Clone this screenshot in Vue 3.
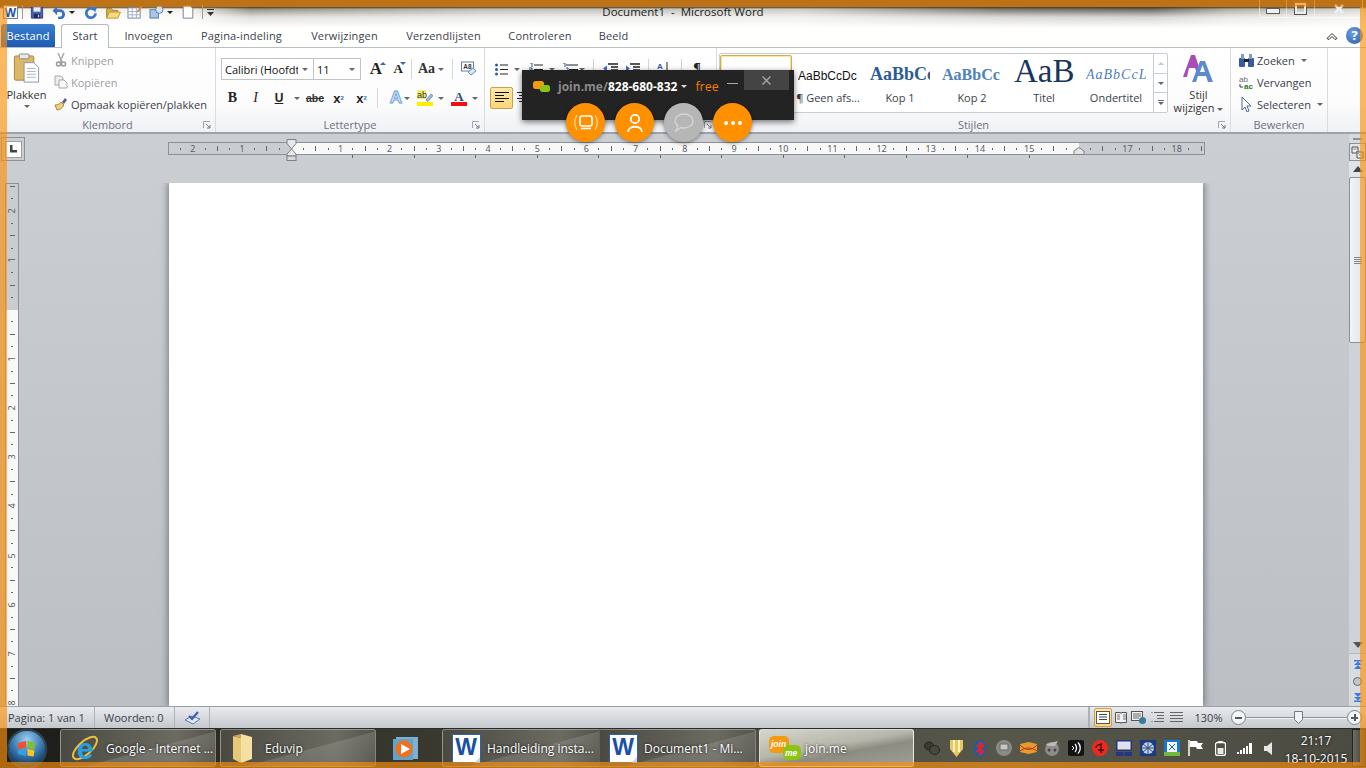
<template>
  <div class="screen">
    <header class="glass">
      <div class="titlebar">
        <div class="qat">
          <svg class="word-mini" width="15" height="14" viewBox="0 0 15 14"><rect x=".5" y=".5" width="14" height="13" fill="#fff" stroke="#5a7fb5"/><text x="7.5" y="12" text-anchor="middle" class="w-glyph" font-size="12">W</text></svg>
          <i class="qat-sep"></i>
          <svg class="q-save" width="14" height="13" viewBox="0 0 15 15"><path d="M1 1h13v13H1z" fill="#4a5fb0" stroke="#2a3a80"/><rect x="3.500" y="1.500" width="8" height="5" fill="#e8eef8"/><rect x="4" y="9" width="7" height="5" fill="#1e2a60"/><rect x="8.500" y="10" width="1.500" height="3" fill="#ccd"/></svg>
          <svg class="q-undo" width="14" height="13" viewBox="0 0 14 14"><path d="M2 5h6a4 4 0 0 1 0 8H6" fill="none" stroke="#3c70c0" stroke-width="3"/><path d="M5 0v10L0 5z" fill="#3c70c0"/></svg>
          <span class="arrow dark q-arrow1"></span>
          <svg class="q-redo" width="13" height="13" viewBox="0 0 14 14"><path d="M11 4a5 5 0 1 0 1.500 4" fill="none" stroke="#3c78c8" stroke-width="3"/><path d="M8 0l6 1-2 6z" fill="#3c78c8"/></svg>
          <svg class="q-open" width="17" height="13" viewBox="0 0 18 15"><path d="M1 3h6l1 2h6v8H1z" fill="#d8b048" stroke="#a57d20"/><path d="M4 7h13l-3 7H1z" fill="#f6da80" stroke="#b88d28"/></svg>
          <svg class="q-form" width="16" height="14" viewBox="0 0 17 15"><rect x="1" y="3" width="13" height="11" fill="#fff" stroke="#6c84a8"/><path d="M1 7h13M1 10.500h13M5.500 3v11M10 3v11" stroke="#9db0cc"/><path d="M10 7l5-6 1.500 1-5 6z" fill="#e08a28"/></svg>
          <svg class="q-shape" width="16" height="14" viewBox="0 0 17 15"><rect x="1" y="5" width="9" height="9" fill="#a9c6e8" stroke="#54799f"/><circle cx="11" cy="5" r="4" fill="#d4e2f2" stroke="#54799f"/></svg>
          <span class="arrow dark q-arrow2"></span>
          <svg class="q-page" width="12" height="14" viewBox="0 0 13 16"><path d="M1 1h8l3 3v11H1z" fill="#fff" stroke="#67758a"/></svg>
          <i class="qat-sep q-sep2"></i>
          <svg class="q-more" width="8" height="8" viewBox="0 0 8 8"><path d="M0 1h7v1H0z" fill="#333"/><path d="M0 4h7L3.500 8z" fill="#333"/></svg>
        </div>
        <div class="doc-title">Document1&nbsp; -&nbsp; Microsoft Word</div>
        <div class="win-controls">
          <span class="win-btn min"><i></i></span>
          <span class="win-btn max"><i></i></span>
          <span class="win-btn close">
            <svg width="12" height="10" viewBox="0 0 12 10"><path d="M2 1l8 8M10 1l-8 8" stroke="#eef" stroke-width="2.500"/></svg>
          </span>
        </div>
      </div>
      <nav class="tabs">
        <span class="tab-file">Bestand</span>
        <span class="tab-active">Start</span>
        <span v-for="tab in tabs" :key="tab" class="tab">{{ tab }}</span>
        <span class="tab-tools">
          <svg width="12" height="8" viewBox="0 0 12 8"><path d="M1 6.500L6 1.500l5 5-2 1-3-3-3 3z" fill="#fff" stroke="#333"/></svg>
          <span class="help">?</span>
        </span>
      </nav>
    </header>

    <section class="ribbon">
      <div class="group g-clip">
        <div class="group-body clip-body">
          <div class="paste">
            <svg width="28" height="31" viewBox="0 0 28 32">
              <rect x="1" y="3" width="20" height="25" rx="1.500" fill="#dcb765" stroke="#a58436"/>
              <rect x="6" y="1" width="10" height="5" rx="1" fill="#e9e9e9" stroke="#888"/>
              <path d="M11 10h10l5 5v15H11z" fill="#fff" stroke="#8a95a8"/>
              <path d="M14 16h9M14 19h9M14 22h9M14 25h9" stroke="#a8b4c4"/>
            </svg>
            <span class="paste-label">Plakken</span>
            <span class="arrow"></span>
          </div>
          <div class="cmd-list">
            <div class="cmd muted">
              <svg width="14" height="14" viewBox="0 0 14 14"><path d="M4 0l4 9M10 0L6 9" stroke="#aaa" stroke-width="1.500"/><circle cx="4.500" cy="11" r="2" fill="none" stroke="#999" stroke-width="1.500"/><circle cx="9.500" cy="11" r="2" fill="none" stroke="#999" stroke-width="1.500"/></svg>
              Knippen
            </div>
            <div class="cmd muted">
              <svg width="14" height="14" viewBox="0 0 14 14"><path d="M1 1h6l2 2v7H1z" fill="#eee" stroke="#aaa"/><path d="M5 5h5l3 3v5H5z" fill="#f8f8f8" stroke="#aaa"/></svg>
              Kopiëren
            </div>
            <div class="cmd">
              <svg width="14" height="14" viewBox="0 0 14 14"><path d="M8 5l3-4 2 2-3 4z" fill="#5c5a9c"/><path d="M1 8c3 0 5-1 6-3l3 3c-2 3-4 5-7 5z" fill="#eed07c" stroke="#a58a3c"/></svg>
              Opmaak kopiëren/plakken
            </div>
          </div>
        </div>
        <div class="group-label">Klembord<svg class="launcher" width="8" height="8" viewBox="0 0 8 8"><path d="M.5 7V.5H7" fill="none" stroke="#9aa"/><path d="M3 3l4 4M7 4v3H4" fill="none" stroke="#778"/></svg></div>
      </div>

      <div class="group g-font">
        <div class="group-body tools-body">
          <div class="tool-row font-row1">
            <div class="combo combo-font"><span class="combo-text">Calibri (Hoofdt</span><span class="arrow"></span></div>
            <div class="combo combo-size"><span class="combo-text">11</span><span class="arrow"></span></div>
            <span class="cell end serif-a big">A<sup class="up"></sup></span>
            <span class="cell end serif-a small">A<sup class="down"></sup></span>
            <i class="sep"></i>
            <span class="cell end aa">Aa</span>
            <span class="cell"><span class="arrow"></span></span>
            <i class="sep"></i>
            <span class="cell end">
              <svg width="16" height="16" viewBox="0 0 16 16"><rect x=".5" y="1" width="12" height="9" fill="#fff" stroke="#5f7fa8"/><text x="6.500" y="8" text-anchor="middle" font-size="6.500" font-weight="700" fill="#333" font-family="Liberation Sans">A8</text><path d="M7 11l5-4 3 3-5 4z" fill="#dde8f5" stroke="#5f8fc8"/></svg>
            </span>
          </div>
          <div class="tool-row font-row2">
            <b class="cell fmt bold">B</b>
            <em class="cell fmt ital">I</em>
            <u class="cell fmt under">U</u>
            <span class="cell"><span class="arrow"></span></span>
            <s class="cell strike">abc</s>
            <span class="cell script">x<sub>2</sub></span>
            <span class="cell script">x<sup>2</sup></span>
            <i class="sep"></i>
            <span class="cell end glow">A</span>
            <span class="cell"><span class="arrow"></span></span>
            <span class="cell end">
              <svg width="16" height="16" viewBox="0 0 16 16"><rect y="0" width="9" height="9" fill="#f6ec6a"/><text x="0" y="8" font-size="9" fill="#333" font-family="Liberation Sans">ab</text><path d="M9 10l5-6 2 1.500-5 6z" fill="#aabbd8" stroke="#6078a0" stroke-width=".7"/><rect y="12" width="16" height="4" fill="#ffee00"/></svg>
            </span>
            <span class="cell"><span class="arrow"></span></span>
            <span class="cell end">
              <svg width="16" height="16" viewBox="0 0 16 16"><text x="8" y="11" text-anchor="middle" font-size="13" font-weight="700" fill="#2c4a80" font-family="Liberation Serif">A</text><rect y="12" width="16" height="4" fill="#f01010"/></svg>
            </span>
            <span class="cell"><span class="arrow"></span></span>
          </div>
        </div>
        <div class="group-label">Lettertype<svg class="launcher" width="8" height="8" viewBox="0 0 8 8"><path d="M.5 7V.5H7" fill="none" stroke="#9aa"/><path d="M3 3l4 4M7 4v3H4" fill="none" stroke="#778"/></svg></div>
      </div>

      <div class="group g-para">
        <div class="group-body para-body">
          <div class="tool-row para-row1">
            <span class="cell end">
              <svg width="13" height="13" viewBox="0 0 13 13"><path d="M5 2h8M5 6.500h8M5 11h8" stroke="#222"/><circle cx="1.500" cy="2" r="1.500" fill="#3355a0"/><circle cx="1.500" cy="6.500" r="1.500" fill="#3355a0"/><circle cx="1.500" cy="11" r="1.500" fill="#3355a0"/></svg>
            </span>
            <span class="cell"><span class="arrow"></span></span>
            <span class="cell end">
              <svg width="14" height="13" viewBox="0 0 14 13"><path d="M5 2h9M5 6.500h9M5 11h9" stroke="#222"/><path d="M1 0h2v4M0 5h3v2H0v2h3M0 10h3v3H0" fill="none" stroke="#3355a0"/></svg>
            </span>
            <span class="cell"><span class="arrow"></span></span>
            <span class="cell end">
              <svg width="16" height="13" viewBox="0 0 16 13"><path d="M4 2h12M7 6.500h9M9 11h7" stroke="#222"/><path d="M1 0h2v4M4 5h2v3M6 9h2v3" fill="none" stroke="#3355a0"/></svg>
            </span>
            <span class="cell"><span class="arrow"></span></span>
            <i class="sep"></i>
            <span class="cell end">
              <svg width="15" height="13" viewBox="0 0 15 13"><path d="M5 1h10M8 4h7M8 7h7M5 10h10" stroke="#222" stroke-width="1.500"/><path d="M0 5.500l4-3v6z" fill="#3b6bc0"/></svg>
            </span>
            <span class="cell end">
              <svg width="15" height="13" viewBox="0 0 15 13"><path d="M5 1h10M8 4h7M8 7h7M5 10h10" stroke="#222" stroke-width="1.500"/><path d="M5 5.500l-4-3v6z" fill="#3b6bc0"/></svg>
            </span>
            <i class="sep"></i>
            <span class="cell start">
              <svg width="14" height="15" viewBox="0 0 14 15"><text x="4" y="7" text-anchor="middle" font-size="8" font-weight="700" fill="#3a5aa8" font-family="Liberation Sans">A</text><text x="4" y="14" text-anchor="middle" font-size="7" fill="#b03030" font-family="Liberation Sans">Z</text><path d="M11 0v13" stroke="#222"/></svg>
            </span>
            <i class="sep"></i>
            <span class="cell pilcrow">¶</span>
          </div>
          <div class="tool-row para-row2">
            <span class="cell align-on">
              <svg width="14" height="12" viewBox="0 0 14 12"><path d="M0 .5h14M0 3.500h9M0 6.500h14M0 9.500h9" stroke="#111"/></svg>
            </span>
            <span class="cell">
              <svg width="14" height="12" viewBox="0 0 14 12"><path d="M0 .5h14M2 3.500h10M0 6.500h14M2 9.500h10" stroke="#222"/></svg>
            </span>
          </div>
        </div>
        <div class="group-label"><svg class="launcher" width="8" height="8" viewBox="0 0 8 8"><path d="M.5 7V.5H7" fill="none" stroke="#9aa"/><path d="M3 3l4 4M7 4v3H4" fill="none" stroke="#778"/></svg></div>
      </div>

      <div class="group g-styles">
        <div class="group-body styles-body">
          <div class="gallery">
            <div class="style-item selected">
              <div class="preview prev-normal">AaBbCcDc</div>
              <div class="style-name">¶ Standaard</div>
            </div>
            <div v-for="s in styles" :key="s.name" class="style-item">
              <div class="preview" :class="s.cls">{{ s.sample }}</div>
              <div class="style-name">{{ s.name }}</div>
            </div>
            <div class="spin">
              <span class="spin-btn"><span class="arrow flip pale"></span></span>
              <span class="spin-btn"><span class="arrow"></span></span>
              <span class="spin-btn"><i class="bar"></i><span class="arrow"></span></span>
            </div>
          </div>
          <div class="change-style">
            <svg width="32" height="28" viewBox="0 0 32 28">
              <path d="M0 22L8 0h4l6 18h-4l-2-5H6l-2 9z" fill="#a94cb4"/>
              <path d="M9 27L17 6h5l8 21h-5l-2-6h-8l-2 6z" fill="#5c8ad0"/>
              <path d="M17 17l2.500-7 2.500 7z" fill="#fff"/>
            </svg>
            <span>Stijl</span>
            <span>wijzigen <span class="arrow"></span></span>
          </div>
        </div>
        <div class="group-label">Stijlen<svg class="launcher" width="8" height="8" viewBox="0 0 8 8"><path d="M.5 7V.5H7" fill="none" stroke="#9aa"/><path d="M3 3l4 4M7 4v3H4" fill="none" stroke="#778"/></svg></div>
      </div>

      <div class="group g-edit">
        <div class="group-body edit-body">
          <div class="cmd-list">
            <div class="cmd">
              <svg width="15" height="14" viewBox="0 0 15 14"><rect x="0" y="5" width="6" height="9" rx="1" fill="#3a5a9c"/><rect x="9" y="5" width="6" height="9" rx="1" fill="#3a5a9c"/><rect x="2" y="1" width="3" height="5" fill="#7c9ad0"/><rect x="10" y="1" width="3" height="5" fill="#7c9ad0"/><rect x="5" y="6" width="5" height="3" fill="#223"/></svg>
              Zoeken <span class="arrow"></span>
            </div>
            <div class="cmd">
              <svg width="15" height="15" viewBox="0 0 15 15"><text x="0" y="7" font-size="8" fill="#667" font-family="Liberation Sans">ab</text><text x="5" y="14" font-size="8" font-weight="700" fill="#207a20" font-family="Liberation Sans">ac</text><path d="M1 9v3h3" fill="none" stroke="#336"/></svg>
              Vervangen
            </div>
            <div class="cmd">
              <svg width="15" height="15" viewBox="0 0 15 15"><path d="M3 0v13l3-3 2 5 2-1-2-5h4z" fill="#fff" stroke="#4a6a9c"/></svg>
              Selecteren <span class="arrow"></span>
            </div>
          </div>
        </div>
        <div class="group-label">Bewerken</div>
      </div>
    </section>

    <main class="workspace">
      <div class="work-left">
        <div class="ruler-row">
          <div class="tab-stop"><span><svg width="9" height="8" viewBox="0 0 9 8"><path d="M1 0h2.500v5H8v2.500H1z" fill="#444"/></svg></span></div>
          <div class="h-ruler-wrap">
            <div class="h-ruler">
              <div class="h-cells">
                <span v-for="c in hCells" :key="c.i" class="h-cell">
                  <template v-if="c.label">{{ c.label }}</template>
                  <i v-else-if="c.kind" :class="c.kind"></i>
                </span>
              </div>
              <svg class="indent-left" width="12" height="22" viewBox="0 0 12 22"><path d="M1 .5h9v4L5.500 10 1 4.500zM5.500 10L10 15v2H1v-2z" fill="#e8e8e8" stroke="#7c8088"/><rect x="1" y="17" width="9" height="4.500" fill="#d8d8d8" stroke="#7c8088"/></svg>
              <svg class="indent-right" width="12" height="8" viewBox="0 0 12 8"><path d="M1 7.500V4L6 .5 11 4v3.500z" fill="#e4e4e4" stroke="#7c8088"/></svg>
            </div>
            <div class="tabstops"></div>
          </div>
        </div>
        <div class="doc-row">
          <div class="v-ruler">
            <div class="v-cells">
              <span v-for="c in vCells" :key="c.i" class="v-cell">
                <span v-if="c.label" class="v-num">{{ c.label }}</span>
                <i v-else-if="c.kind" :class="c.kind"></i>
              </span>
            </div>
          </div>
          <div class="page"></div>
        </div>
      </div>
      <aside class="scrollbar">
        <div class="sb-dash"><i></i></div>
        <div class="sb-toggle">
          <svg width="13" height="13" viewBox="0 0 13 13"><path d="M1 1h6v6H1z" fill="#eee" stroke="#555"/><path d="M6 6h6v6H6z" fill="#eee" stroke="#555"/><path d="M2 3h4M8 9h3M5 5l4 4" stroke="#999"/></svg>
        </div>
        <div class="sb-btn"><span class="tri up"></span></div>
        <div class="sb-thumb"><i></i></div>
        <div class="sb-track"></div>
        <div class="sb-btn down-btn"><span class="tri down"></span></div>
        <div class="sb-nav">
          <svg width="8" height="9" viewBox="0 0 8 9"><path d="M0 0h8v1.500H0z M4 1.500L8 5H0z M4 5l4 4H0z" fill="#3a7ae0"/></svg>
          <span class="browse"></span>
          <svg width="8" height="9" viewBox="0 0 8 9"><path d="M0 0l4 4 4-4z M0 4l4 3.500L8 4z M0 7.500h8V9H0z" fill="#3a7ae0"/></svg>
        </div>
      </aside>
    </main>

    <footer class="statusbar">
      <span class="st-item st-page">Pagina: 1 van 1</span>
      <span class="st-item st-words">Woorden: 0</span>
      <span class="st-item st-check">
        <svg width="17" height="14" viewBox="0 0 17 14"><path d="M1 9l7-4 8 3-7 5z" fill="#dfe8f6" stroke="#5a78b8"/><path d="M5 5l3 3 6-7" fill="none" stroke="#3a5ab0" stroke-width="2"/></svg>
      </span>
      <div class="st-right">
        <i class="st-rule"></i>
        <span class="view on"><svg width="14" height="13" viewBox="0 0 14 13"><rect x=".5" y=".5" width="13" height="12" fill="#fff" stroke="#555"/><path d="M3 3.500h8M3 6h8M3 8.500h8" stroke="#444"/></svg></span>
        <span class="view"><svg width="12" height="13" viewBox="0 0 12 13"><path d="M.5 1.500h5l.5 1 .5-1h5v10h-5l-.5 1-.5-1h-5z" fill="#f2f2f2" stroke="#555"/><path d="M2 4h3M2 6h3M2 8h3M8 4h3M8 6h3M8 8h3" stroke="#777"/></svg></span>
        <span class="view"><svg width="15" height="13" viewBox="0 0 15 13"><rect x=".5" y=".5" width="11" height="9" fill="#f2f2f2" stroke="#555"/><path d="M2 3h8M2 5h8M2 7h6" stroke="#666"/><circle cx="11.500" cy="9.500" r="3.500" fill="#3a7a9c"/></svg></span>
        <span class="view"><svg width="13" height="11" viewBox="0 0 13 11"><path d="M3 .5h10M6 3.500h7M6 6.500h7M3 9.500h10" stroke="#666"/><path d="M0 .5h2M0 9.500h2" stroke="#999"/></svg></span>
        <span class="view"><svg width="13" height="11" viewBox="0 0 13 11"><path d="M0 .5h13M0 3.500h13M0 6.500h13M0 9.500h13" stroke="#666"/></svg></span>
        <span class="zoom-pct">130%</span>
        <span class="zoom-btn"><i class="h"></i></span>
        <span class="zoom-track"><svg class="knob" width="9" height="13" viewBox="0 0 9 13"><path d="M.5.500h8v8l-4 4-4-4z" fill="#f2f3f5" stroke="#757a82"/></svg></span>
        <span class="zoom-btn"><i class="h"></i><i class="v"></i></span>
      </div>
    </footer>

    <nav class="taskbar">
      <div class="orb-cell">
        <span class="orb">
          <svg width="20" height="20" viewBox="0 0 20 20">
            <path d="M1 4l8-2 0 7-8 1z" fill="#f05030"/>
            <path d="M10.500 1.500l8 3-1 6-7-1.500z" fill="#80c030"/>
            <path d="M1 11l8-1 0 7-8-2z" fill="#30a0e8"/>
            <path d="M10.500 10l7 1.500-1 6-6-1z" fill="#f8c820"/>
          </svg>
        </span>
      </div>
      <span class="task t-ie">
        <svg width="31" height="31" viewBox="0 0 31 31">
          <ellipse cx="15" cy="15" rx="15" ry="6.500" transform="rotate(-42 15 15)" fill="none" stroke="#e8c040" stroke-width="2"/>
          <text x="15" y="26" text-anchor="middle" class="ie-glyph">e</text>
        </svg>
        <span class="task-text">Google - Internet ...</span>
      </span>
      <span class="task t-folder">
        <svg width="24" height="30" viewBox="0 0 24 30"><path d="M2 3l8 2v25L2 26z" fill="#e6c878"/><path d="M10 1l11 3v22l-11 4z" fill="#f4e0a0"/><path d="M10 1l-8 2 8 2z" fill="#caa858"/></svg>
        <span class="task-text">Eduvip</span>
      </span>
      <span class="pinned">
        <svg width="26" height="25" viewBox="0 0 26 25"><rect x="3" y="1" width="22" height="22" fill="#7eb0d0"/><rect x="0" y="3" width="20" height="21" fill="#62a2cc"/><circle cx="11" cy="13" r="8.500" fill="#f0701c"/><path d="M8 8l9 5-9 5z" fill="#fff"/></svg>
      </span>
      <span class="task-group">
        <span class="task t-w1">
          <svg width="29" height="29" viewBox="0 0 29 29"><rect x=".5" y=".5" width="28" height="28" fill="#fff" stroke="#3060a8"/><path d="M22 29l6-6v6z" fill="#c8d4e8"/><text x="14" y="21" text-anchor="middle" class="w-glyph" font-size="23">W</text></svg>
          <span class="task-text">Handleiding insta...</span>
        </span>
        <span class="task t-w2">
          <svg width="29" height="29" viewBox="0 0 29 29"><rect x=".5" y=".5" width="28" height="28" fill="#fff" stroke="#3060a8"/><path d="M22 29l6-6v6z" fill="#c8d4e8"/><text x="14" y="21" text-anchor="middle" class="w-glyph" font-size="23">W</text></svg>
          <span class="task-text">Document1 - Mi...</span>
        </span>
      </span>
      <span class="task t-join">
        <svg width="32" height="24" viewBox="0 0 32 24"><rect x="0" y="0" width="20" height="17" rx="5" fill="#f49a10"/><rect x="14" y="9" width="18" height="15" rx="5" fill="#8cc414"/><text x="2" y="11" font-size="8.500" font-weight="700" font-style="italic" fill="#fff" font-family="Liberation Sans">join</text><text x="16" y="20" font-size="8.500" font-weight="700" font-style="italic" fill="#fff" font-family="Liberation Sans">me</text></svg>
        <span class="task-text">join.me</span>
      </span>
      <div class="tray">
        <span class="tray-cell"><svg width="16" height="14" viewBox="0 0 16 14"><ellipse cx="5" cy="5" rx="4.500" ry="4" fill="#3a3a34" stroke="#26261f"/><ellipse cx="10.500" cy="9" rx="5" ry="4.500" fill="#48483f" stroke="#26261f"/></svg></span>
        <span class="tray-cell"><svg width="13" height="17" viewBox="0 0 13 17"><path d="M0 0h13v9l-6.500 8L0 9z" fill="#e8c860"/><path d="M3 0h2v12H3zM8 0h2v12H8z" fill="#fbf2c0"/></svg></span>
        <span class="tray-cell"><svg width="12" height="17" viewBox="0 0 12 17"><ellipse cx="6" cy="8.500" rx="6" ry="8.500" fill="#1460b0"/><path d="M2.500 5l7 6.500L6 14.500v-12l3.500 3L2.500 12" fill="none" stroke="#f02020" stroke-width="1.800"/></svg></span>
        <span class="tray-cell"><svg width="16" height="16" viewBox="0 0 16 16"><circle cx="8" cy="8" r="8" fill="#8a8a86"/><rect x="4" y="4" width="8" height="6" fill="#c8c8c4" stroke="#666"/></svg></span>
        <span class="tray-cell"><svg width="17" height="12" viewBox="0 0 17 12"><path d="M0 2L8.500 0 17 2v8l-8.500 2L0 10z" fill="#e89a2c"/><path d="M0 3c6 6 11 6 17 0M0 9c6-4 11-4 17 0" fill="none" stroke="#b03a18"/></svg></span>
        <span class="tray-cell"><svg width="16" height="16" viewBox="0 0 16 16"><circle cx="8" cy="9" r="7" fill="#8c8c88"/><path d="M2 4l12-3-3 5H4z" fill="#bbb"/><circle cx="5" cy="10" r="1.500" fill="#444"/><circle cx="11" cy="10" r="1.500" fill="#444"/></svg></span>
        <span class="tray-cell"><svg width="16" height="16" viewBox="0 0 16 16"><rect width="16" height="16" rx="2" fill="#141414"/><path d="M4 6l2 2-2 2" fill="none" stroke="#fff"/><path d="M7 4c2 2 2 6 0 8M10 2.500c3 3 3 8 0 11" fill="none" stroke="#fff" stroke-width="1.300"/></svg></span>
        <span class="tray-cell"><svg width="16" height="16" viewBox="0 0 16 16"><circle cx="8" cy="8" r="8" fill="#e82a20"/><path d="M4 8c0-3 3-4 6-3M9 3v10M6 10h6" fill="none" stroke="#3a120e" stroke-width="1.300"/></svg></span>
        <span class="tray-cell"><svg width="16" height="16" viewBox="0 0 16 16"><rect width="16" height="11" fill="#26367c"/><rect x="1.500" y="1.500" width="13" height="8" fill="#dfe2ea"/><rect y="12" width="7.500" height="4" fill="#26367c"/><rect x="8.500" y="12" width="7.500" height="4" fill="#26367c"/></svg></span>
        <span class="tray-cell"><svg width="16" height="16" viewBox="0 0 16 16"><rect width="16" height="16" fill="#1c3a80"/><circle cx="8" cy="8" r="6" fill="#c8d0e0"/><path d="M3 4l10 8M13 4L3 12M8 2v12M2 8h12" stroke="#2a4c90"/></svg></span>
        <span class="tray-cell"><svg width="16" height="16" viewBox="0 0 16 16"><rect width="16" height="16" fill="#1878d0"/><rect x="3" y="2" width="10" height="10" fill="#eef4fa"/><path d="M5 4l6 6M11 4l-6 6" stroke="#1860b0"/><rect y="12" width="16" height="4" fill="#70b840"/></svg></span>
        <span class="tray-cell"><svg width="16" height="16" viewBox="0 0 16 16"><path d="M1 0v16" stroke="#fff" stroke-width="1.500"/><path d="M2 1h7l1 2h5l-2 3 2 3h-6l-1-2H2z" fill="#fff"/></svg></span>
        <span class="tray-cell"><svg width="11" height="15" viewBox="0 0 11 15"><rect x=".5" y="1.500" width="10" height="13" rx="2" fill="none" stroke="#fff" stroke-width="1.300"/><rect x="3.500" y="0" width="4" height="2" fill="#fff"/><rect x="2.500" y="7" width="6" height="6" fill="#e8e8e4"/></svg></span>
        <span class="tray-cell"><svg width="15" height="11" viewBox="0 0 15 11"><path d="M0 9h2v2H0zM3 7h2v4H3zM6 5h2v6H6zM9 3h2v8H9zM12 0h3v11h-3z" fill="#fff"/></svg></span>
        <span class="tray-cell"><svg width="8" height="13" viewBox="0 0 8 13"><path d="M0 4h3l5-4v13l-5-4H0z" fill="#e6e6e2"/></svg></span>
      </div>
      <div class="clock"><span>21:17</span><span>18-10-2015</span></div>
      <span class="show-desktop"></span>
    </nav>

    <!-- join.me bar floats above the ribbon -->
    <div class="joinme">
      <div class="jm-top">
        <svg class="jm-logo" width="17" height="11" viewBox="0 0 17 11"><rect x="0" y="0" width="11" height="8" rx="2.500" fill="#f49a10"/><rect x="7" y="4" width="10" height="7" rx="2.500" fill="#8cc414"/></svg>
        <span class="jm-url"><span class="jm-host">join.me/</span>828-680-832</span>
        <span class="jm-caret"></span>
        <span class="jm-free">free</span>
        <i class="jm-min"></i>
        <span class="jm-close"><svg width="9" height="9" viewBox="0 0 9 9"><path d="M.5.500l8 8M8.500.500l-8 8" stroke="#a8a8a8" stroke-width="1.300"/></svg></span>
      </div>
      <div class="jm-actions">
        <span class="jm-circle">
          <svg width="24" height="20" viewBox="0 0 24 20"><rect x="6" y="3" width="12" height="10" rx="2" fill="none" stroke="#fff" stroke-width="1.600"/><path d="M7 15.500h10" stroke="#fff" stroke-width="1.600"/><path d="M3 2C0 7 0 12 3 17M21 2c3 5 3 10 0 15" fill="none" stroke="#ffd9a0" stroke-width="1.200"/></svg>
        </span>
        <span class="jm-circle">
          <svg width="18" height="20" viewBox="0 0 18 20"><circle cx="9" cy="6" r="4.200" fill="none" stroke="#fff" stroke-width="1.800"/><path d="M2 19c0-7 14-7 14 0" fill="none" stroke="#fff" stroke-width="1.800"/></svg>
        </span>
        <span class="jm-circle off">
          <svg width="20" height="19" viewBox="0 0 20 19"><path d="M10 1c5 0 9 3 9 7s-4 7-9 7c-1 0-2 0-3-.500L2 18l2-5C2 11.500 1 10 1 8c0-4 4-7 9-7z" fill="none" stroke="#d4d4d4" stroke-width="1.400"/></svg>
        </span>
        <span class="jm-circle"><i></i><i></i><i></i></span>
      </div>
    </div>

    <!-- orange screen-share frame -->
    <div class="share-frame"></div>
  </div>
</template>

<script setup>
const tabs = ['Invoegen', 'Pagina-indeling', 'Verwijzingen', 'Verzendlijsten', 'Controleren', 'Beeld']

const styles = [
  { name: '¶ Geen afs...', sample: 'AaBbCcDc', cls: 'prev-normal' },
  { name: 'Kop 1', sample: 'AaBbCc', cls: 'prev-h1' },
  { name: 'Kop 2', sample: 'AaBbCc', cls: 'prev-h2' },
  { name: 'Titel', sample: 'AaB', cls: 'prev-title' },
  { name: 'Ondertitel', sample: 'AaBbCcL', cls: 'prev-sub' }
]

// ruler cells are quarter-cm wide: number, dot, tick, dot
function rulerCell(i) {
  const m = ((i % 4) + 4) % 4
  if (m === 0) return { i, label: i === 0 || i === 64 ? '' : String(Math.abs(i / 4)), kind: '' }
  return { i, label: '', kind: m === 2 ? 'tick' : 'dot' }
}

const hCells = []
for (let i = -10; i <= 74; i++) hCells.push(rulerCell(i))

const vCells = []
for (let i = -10; i <= 33; i++) vCells.push(rulerCell(i))
</script>

<style>
html, body { margin: 0; background: #c9ccd1; }
</style>

<style scoped>
.screen {
  position: relative;
  width: 1366px;
  height: 768px;
  overflow: hidden;
  display: flex;
  flex-direction: column;
  font-family: "Open Sans", "Noto Sans", sans-serif;
  font-size: 11px;
  color: #3b3f4a;
}
i { display: block; font-style: normal; }

.arrow {
  display: inline-block;
  width: 0;
  height: 0;
  border-left: 3px solid transparent;
  border-right: 3px solid transparent;
  border-top: 3px solid #666;
  vertical-align: middle;
}
.arrow.dark { border-top-color: #222; }
.arrow.flip { border-top: 0; border-bottom: 3px solid #666; }
.arrow.pale { border-bottom-color: #c4c7cc; }

/* window glass */
.glass {
  height: 48px;
  flex: none;
  background:
    linear-gradient(to bottom, #4a3c28 0, #4a3c28 7px, transparent 9px),
    linear-gradient(to bottom, rgba(255,255,255,0) 8px, rgba(255,255,255,.75) 17px, #fffffd 28px),
    linear-gradient(to right, #f4f0e8 0, #f4f0e8 190px, #8a8578 250px, #b8b5ac 480px, #c8c5bc 800px, #6c685e 1000px, #5a574e 1150px, #a8a498 1230px, #d8d5cc 1366px);
  border-bottom: 1px solid #b9bdc4;
  box-sizing: border-box;
}
.titlebar {
  height: 24px;
  display: flex;
  position: relative;
}
.qat {
  display: flex;
  align-items: center;
  height: 24px;
  width: 240px;
}
.word-mini { margin-left: 3px; }
.w-glyph { font-family: "Liberation Sans", sans-serif; font-weight: 700; fill: #1a4fa8; }
.qat-sep { width: 1px; height: 14px; background: #9a9a9a; margin-left: 4px; }
.q-save { margin-left: 7px; }
.q-undo { margin-left: 8px; }
.q-arrow1 { margin-left: 3px; }
.q-redo { margin-left: 9px; }
.q-open { margin-left: 8px; }
.q-form { margin-left: 5px; }
.q-shape { margin-left: 6px; }
.q-arrow2 { margin-left: 2px; }
.q-page { margin-left: 9px; }
.q-sep2 { margin-left: 8px; }
.q-more { margin-left: 4px; }
.doc-title {
  position: absolute;
  left: 0;
  right: 0;
  top: 4px;
  text-align: center;
  font-size: 11.500px;
  line-height: 16px;
  color: #1c1c1c;
}
.win-controls {
  margin-left: auto;
  display: flex;
  height: 18px;
  margin-right: 3px;
  border: 1px solid rgba(255,255,255,.55);
  border-top: 0;
  border-radius: 0 0 4px 4px;
  box-sizing: border-box;
  position: relative;
}
.win-btn {
  display: flex;
  align-items: center;
  justify-content: center;
  border-right: 1px solid rgba(255,255,255,.45);
  width: 27px;
  box-sizing: border-box;
}
.win-btn.max { width: 28px; }
.win-btn.close { width: 47px; border-right: 0; }
.win-btn.min i { width: 12px; height: 4px; margin-top: 4px; background: #f0f0f0; border: 1px solid #5d5d5d; }
.win-btn.max i { width: 7px; height: 7px; border: 2px solid #eee; outline: 1px solid #555; }

.tabs {
  height: 23px;
  display: grid;
  grid-template-columns: 1px 54px 6px 48px 2px 75px 111px 95px 103px 90px 57px 1fr;
  align-items: stretch;
  line-height: 23px;
  color: #3b4250;
  font-size: 11px;
  letter-spacing: .15px;
}
.tab-file {
  grid-column: 2;
  background: linear-gradient(to bottom, #3b7fd0, #1c5cb2);
  color: #fff;
  text-align: center;
  border-radius: 3px 3px 0 0;
}
.tab-active {
  grid-column: 4;
  background: #fff;
  border: 1px solid #b6bac1;
  border-bottom: 0;
  border-radius: 3px 3px 0 0;
  text-align: center;
  margin-bottom: -1px;
  box-sizing: border-box;
  line-height: 22px;
}
.tab { text-align: center; }
.tab:nth-of-type(3) { grid-column: 6; }
.tab-tools {
  display: flex;
  align-items: center;
  justify-content: flex-end;
  gap: 8px;
  padding-right: 3px;
}
.help {
  width: 17px;
  height: 17px;
  border-radius: 50%;
  background: radial-gradient(circle at 40% 35%, #6c9ee0, #2a5cb0);
  color: #fff;
  font-weight: 700;
  font-size: 13px;
  line-height: 17px;
  text-align: center;
  letter-spacing: 0;
}

/* ribbon */
.ribbon {
  height: 86px;
  flex: none;
  display: flex;
  box-sizing: border-box;
  border-bottom: 2px solid #9fa3a9;
  background: linear-gradient(to bottom, #fff 0, #fcfcfd 65%, #eff1f4 100%);
}
.group {
  display: flex;
  flex-direction: column;
  border-right: 1px solid #d9dce1;
  box-sizing: border-box;
}
.g-clip { width: 216px; }
.g-font { width: 269px; }
.g-para { width: 232px; }
.g-styles { width: 514px; }
.g-edit { width: 97px; }
.group-body { height: 69px; flex: none; box-sizing: border-box; }
.group-label {
  position: relative;
  text-align: center;
  line-height: 16px;
  color: #6f7180;
  font-size: 11px;
}
.launcher { position: absolute; right: 4px; top: 4px; }

.clip-body { display: flex; padding-left: 7px; }
.paste {
  width: 39px;
  display: flex;
  flex-direction: column;
  align-items: center;
  padding-top: 5px;
}
.paste-label { color: #333; line-height: 14px; margin-top: 4px; }
.paste .arrow { margin-top: 3px; }
.cmd-list { margin-left: 8px; padding-top: 1px; }
.cmd {
  height: 22px;
  display: flex;
  align-items: center;
  gap: 3px;
  white-space: nowrap;
  color: #3a3e4a;
}
.cmd.muted { color: #9c9ea4; }
.cmd .arrow { margin-left: 3px; }

.tools-body { padding: 10px 0 0 5px; }
.tool-row { display: grid; align-items: center; height: 22px; }
.cell { display: flex; align-items: center; justify-content: center; height: 22px; color: #222; }
.cell.end { justify-content: flex-end; }
.cell.start { justify-content: flex-start; }
.sep { width: 1px; height: 20px; background: #d4d6da; justify-self: center; }
.font-row1 { grid-template-columns: 92px 48px 21px 21px 16px 16px 12px 10px 20px; }
.font-row2 {
  grid-template-columns: 23px 23px 24px 12px 24px 23px 23px 8px 21px 9px 22px 16px 18px 15px;
  margin-top: 7px;
}
.combo {
  height: 22px;
  box-sizing: border-box;
  border: 1px solid #bfc3ca;
  background: #fff;
  display: flex;
  align-items: center;
  justify-content: space-between;
  padding: 0 5px 0 3px;
  color: #111;
  overflow: hidden;
  white-space: nowrap;
}
.combo-font { width: 93px; }
.combo-text { overflow: hidden; }
.combo-font .combo-text { width: 73px; }
.serif-a { font-family: "Liberation Serif", serif; font-weight: 700; position: relative; color: #222; }
.serif-a.big { font-size: 17px; }
.serif-a.small { font-size: 13px; }
.serif-a sup {
  position: absolute;
  right: 0;
  top: 4px;
  border-left: 3px solid transparent;
  border-right: 3px solid transparent;
}
.serif-a sup.up { border-bottom: 3px solid #3a66a8; right: -4px; }
.serif-a sup.down { border-top: 3px solid #3a66a8; right: -3px; }
.aa { font-family: "Liberation Serif", serif; font-weight: 700; font-size: 14px; color: #333; }
.fmt { font-family: "Liberation Serif", serif; font-size: 14px; }
.bold { font-weight: 700; }
.ital { font-style: italic; }
.under { text-decoration: underline; font-weight: 700; font-family: "Liberation Sans", sans-serif; font-size: 12px; }
.strike { font-family: "Liberation Sans", sans-serif; font-size: 10.500px; font-weight: 700; color: #333; }
.script { font-family: "Liberation Sans", sans-serif; font-weight: 700; font-size: 13px; }
.script sub, .script sup { font-size: 6px; color: #3a66a8; line-height: 0; }
.glow {
  font-family: "Liberation Sans", sans-serif;
  font-weight: 700;
  font-size: 17px;
  color: #e8f0fa;
  -webkit-text-stroke: 1px #6aa0dc;
}

.para-body { padding: 10px 0 0 5px; }
.para-row1 { grid-template-columns: 18px 18px 17px 18px 17px 8px 14px 18px 22px 16px 16px 18px 14px; }
.para-row2 { grid-template-columns: 23px 22px; margin-top: 7px; }
.align-on {
  height: 22px;
  width: 23px;
  box-sizing: border-box;
  border: 1px solid #c8a050;
  border-radius: 2px;
  background: linear-gradient(to bottom, #fde9a8, #fcd679);
}
.pilcrow { font-family: "Liberation Serif", serif; font-size: 14px; font-weight: 700; }

.styles-body { display: flex; padding: 5px 0 0 2px; }
.gallery {
  width: 449px;
  height: 60px;
  box-sizing: border-box;
  border: 1px solid #c8ccd3;
  border-radius: 2px;
  background: #fff;
  display: flex;
}
.style-item {
  width: 72px;
  height: 58px;
  box-sizing: border-box;
  display: flex;
  flex-direction: column;
  align-items: center;
  flex: none;
}
.style-item.selected {
  width: 72px;
  height: 56px;
  margin-top: 1px;
  border: 1px solid #d4ac4e;
  border-radius: 2px;
  box-shadow: inset 0 0 0 1px #ffe59a;
}
.preview {
  width: 60px;
  height: 35px;
  overflow: hidden;
  white-space: nowrap;
  display: flex;
  align-items: flex-end;
  padding-bottom: 6px;
  box-sizing: border-box;
  color: #111;
}
.prev-normal { font-family: "Liberation Sans", sans-serif; font-size: 12px; }
.prev-h1 { font-family: "Liberation Serif", serif; font-weight: 700; font-size: 18px; color: #2f5b93; padding-bottom: 4px; }
.prev-h2 { font-family: "Liberation Serif", serif; font-weight: 700; font-size: 16px; color: #4f81bd; padding-bottom: 5px; }
.prev-title { font-family: "Liberation Serif", serif; font-size: 33px; color: #17365d; padding-bottom: 1px; line-height: 34px; }
.prev-sub { font-family: "Liberation Serif", serif; font-style: italic; font-size: 14px; letter-spacing: 1px; color: #4f81bd; padding-bottom: 6px; }
.style-name { color: #3a3e4a; line-height: 14px; margin-top: 2px; white-space: nowrap; }
.spin {
  margin-left: 1px;
  width: 14px;
  display: flex;
  flex-direction: column;
  border-left: 1px solid #c8ccd3;
}
.spin-btn {
  flex: 1;
  display: flex;
  flex-direction: column;
  align-items: center;
  justify-content: center;
  gap: 1px;
  border-bottom: 1px solid #c8ccd3;
}
.spin-btn:last-child { border-bottom: 0; }
.spin .bar { width: 6px; height: 1px; background: #666; }
.change-style {
  width: 61px;
  display: flex;
  flex-direction: column;
  align-items: center;
  padding-top: 2px;
  color: #333;
  line-height: 13px;
}
.change-style svg { margin-bottom: 5px; }

/* rulers and page */
.workspace {
  height: 572px;
  flex: none;
  display: flex;
  background: linear-gradient(to bottom, #cbced3, #bcbfc4);
}
.work-left { width: 1349px; display: flex; flex-direction: column; }
.ruler-row { height: 49px; flex: none; display: flex; align-items: flex-start; }
.tab-stop {
  width: 24px;
  height: 24px;
  margin: 3px 0 0 1px;
  border: 1px solid #8c9097;
  box-sizing: border-box;
  display: flex;
  align-items: center;
  justify-content: center;
}
.tab-stop span {
  width: 15px;
  height: 15px;
  background: #fff;
  outline: 1px solid #9ca0a6;
  display: flex;
  align-items: center;
  justify-content: center;
}
.h-ruler-wrap { margin: 8px 0 0 143px; width: 1037px; }
.h-ruler {
  position: relative;
  height: 13px;
  box-sizing: border-box;
  border: 1px solid #8c9097;
  background: linear-gradient(to right, #c9ccd1 122px, #f8f8f8 122px, #f8f8f8 910px, #c9ccd1 910px);
}
.h-cells {
  display: flex;
  height: 100%;
  overflow: hidden;
}
.h-cell {
  flex: 0 0 12.300px;
  height: 11px;
  display: flex;
  align-items: center;
  justify-content: center;
  font-size: 9px;
  line-height: 11px;
  color: #5a5e66;
  font-family: "Noto Sans", sans-serif;
}
.h-cell:first-child { margin-left: -6.800px; }
.h-cell .tick { width: 1px; height: 5px; background: #666; }
.h-cell .dot { width: 1px; height: 2px; background: #666; }
.indent-left { position: absolute; left: 117px; top: -4px; }
.indent-right { position: absolute; left: 904px; top: 4px; }
.tabstops {
  width: 678px;
  height: 3px;
  margin-left: 184px;
  background: repeating-linear-gradient(to right, #666 0, #666 1px, transparent 1px, transparent 61.500px);
}
.doc-row { flex: 1; display: flex; overflow: hidden; min-height: 0; }
.v-ruler {
  width: 14px;
  height: 524px;
  margin-left: 5px;
  flex: none;
  box-sizing: border-box;
  border: 1px solid #8c9097;
  border-bottom: 0;
  background: linear-gradient(to bottom, #c9ccd1 126px, #f8f8f8 126px);
  overflow: hidden;
}
.v-cells { display: flex; flex-direction: column; margin-top: -3.500px; }
.v-cell {
  flex: 0 0 12.300px;
  height: 12.300px;
  display: flex;
  align-items: center;
  justify-content: center;
}
.v-num {
  font-size: 9px;
  line-height: 10px;
  color: #5a5e66;
  transform: rotate(-90deg);
  font-family: "Noto Sans", sans-serif;
}
.v-cell .tick { width: 5px; height: 1px; background: #666; }
.v-cell .dot { width: 2px; height: 1px; background: #666; }
.page {
  width: 1034px;
  margin-left: 150px;
  background: #fff;
  box-shadow: 0 0 7px 1px rgba(70,72,80,.65);
}

.scrollbar {
  width: 17px;
  flex: none;
  display: flex;
  flex-direction: column;
  background: #d6d9de;
}
.sb-dash { height: 9px; display: flex; align-items: center; justify-content: center; }
.sb-dash i { width: 9px; height: 2px; background: #8b8f96; }
.sb-toggle {
  height: 18px;
  box-sizing: border-box;
  border: 1px solid #8c9097;
  display: flex;
  align-items: center;
  justify-content: center;
  background: #e2e4e8;
}
.sb-btn { height: 16px; display: flex; align-items: center; justify-content: center; background: #e0e3e8; }
.tri { width: 0; height: 0; border-left: 5px solid transparent; border-right: 5px solid transparent; }
.tri.up { border-bottom: 6px solid #444; }
.tri.down { border-top: 6px solid #555; }
.sb-thumb {
  height: 166px;
  box-sizing: border-box;
  border: 1px solid #8c9097;
  border-radius: 2px;
  background: linear-gradient(to right, #f2f4f8, #e0e3ea);
  display: flex;
  align-items: center;
  justify-content: center;
}
.sb-thumb i {
  width: 8px;
  height: 7px;
  background: repeating-linear-gradient(to bottom, #80848c 0, #80848c 1px, transparent 1px, transparent 2px);
}
.sb-track { flex: 1; background: #cfd2d8; }
.down-btn { border-bottom: 1px solid #b6bac0; background: #cfd2d8; }
.sb-nav {
  height: 52px;
  display: flex;
  flex-direction: column;
  align-items: center;
  justify-content: space-between;
  padding: 6px 0 4px;
  box-sizing: border-box;
  background: #d8dbe0;
}
.browse { width: 7px; height: 7px; border: 1px solid #666; border-radius: 50%; background: #c4c6ca; }

/* status bar */
.statusbar {
  height: 22px;
  flex: none;
  box-sizing: border-box;
  border-top: 1px solid #9aa0a8;
  background: linear-gradient(to bottom, #e9ebef, #c5c8cd);
  display: flex;
  align-items: stretch;
  color: #3a3f4b;
  line-height: 21px;
}
.st-item { border-right: 1px solid #b0b3b8; box-sizing: border-box; text-align: left; white-space: nowrap; }
.st-page { width: 95px; padding-left: 8px; }
.st-words { width: 80px; padding-left: 9px; }
.st-check { width: 35px; display: flex; align-items: center; justify-content: center; }
.st-right {
  margin-left: auto;
  width: 278px;
  display: grid;
  grid-template-columns: 6px 18px 18px 17px 20px 19px 45px 15px 101px 14px 5px;
  align-items: center;
}
.st-rule { width: 2px; height: 21px; background: #aeb1b6; }
.view { display: flex; align-items: center; justify-content: center; height: 19px; }
.view.on {
  box-sizing: border-box;
  border: 1px solid #c8a050;
  border-radius: 2px;
  background: linear-gradient(to bottom, #fde9a8, #fcd679);
}
.zoom-pct { text-align: center; }
.zoom-btn {
  position: relative;
  width: 15px;
  height: 15px;
  box-sizing: border-box;
  border: 1px solid #7d8188;
  border-radius: 50%;
  background: #f4f5f7;
}
.zoom-btn i { position: absolute; background: #55585e; }
.zoom-btn .h { left: 3px; top: 5.500px; width: 7px; height: 2px; }
.zoom-btn .v { left: 5.500px; top: 3px; width: 2px; height: 7px; }
.zoom-track {
  position: relative;
  height: 1px;
  background: #8f9399;
  box-shadow: 0 1px 0 #f4f5f7;
}
.knob { position: absolute; left: 48px; top: -6px; }

/* taskbar */
.taskbar {
  height: 40px;
  flex: none;
  display: flex;
  align-items: flex-start;
  background: linear-gradient(to right, #1c1c19 0, #1f1f1b 60px, #33332a 300px, #3a392f 440px, #4e4d43 760px, #57564b 1000px, #4c4b42 1366px);
  border-top: 1px solid #2a2a26;
  box-sizing: border-box;
  color: #fff;
}
.orb-cell { width: 60px; height: 39px; display: flex; align-items: center; justify-content: center; padding-right: 6px; box-sizing: border-box; }
.orb {
  width: 36px;
  height: 36px;
  border-radius: 50%;
  display: flex;
  align-items: center;
  justify-content: center;
  background: radial-gradient(circle at 50% 25%, #9fd0ee 0, #3c7cb4 45%, #123a5e 80%, #0a2238 100%);
  box-shadow: 0 0 0 1px #20384e, 0 0 2px 1px #7aa;
}
.task {
  height: 38px;
  width: 156px;
  box-sizing: border-box;
  flex: none;
  display: flex;
  align-items: center;
  border: 1px solid rgba(255,255,255,.32);
  border-radius: 3px;
  background:
    linear-gradient(165deg, transparent 55%, rgba(255,255,255,.12) 56%, rgba(255,255,255,.03) 100%),
    linear-gradient(to right, #4a4a42, #6c6b62 75%, #55544c);
  white-space: nowrap;
}
.task-text { font-size: 12px; text-shadow: 0 0 3px #000; }
.t-ie { padding-left: 9px; gap: 5px; }
.ie-glyph { font-family: "Liberation Sans", sans-serif; font-weight: 700; font-size: 30px; fill: #28a0e0; }
.t-folder { margin-left: 4px; padding-left: 10px; gap: 10px; }
.pinned { width: 66px; height: 38px; display: flex; align-items: center; padding-left: 17px; box-sizing: border-box; flex: none; }
.task-group { display: flex; width: 314px; flex: none; }
.t-w1 { width: 158px; padding-left: 9px; gap: 6px; border-right-color: rgba(255,255,255,.12); border-radius: 3px 0 0 3px; }
.t-w2 { width: 156px; padding-left: 9px; gap: 6px; border-left: 0; border-radius: 0 3px 3px 0; }
.t-join {
  margin-left: 3px;
  width: 155px;
  padding-left: 9px;
  gap: 4px;
  border-color: rgba(255,255,255,.65);
  background:
    linear-gradient(170deg, #d6d6cc 0, #b5b5aa 45%, #8c8c82 60%, #a0a096 100%);
}
.tray { display: flex; align-items: center; height: 38px; padding-left: 6px; flex: none; }
.tray-cell { width: 24px; height: 24px; display: flex; align-items: center; justify-content: center; }
.clock {
  width: 72px;
  flex: none;
  display: flex;
  flex-direction: column;
  align-items: center;
  font-size: 12px;
  line-height: 18px;
  padding-top: 3px;
  text-shadow: 0 0 3px #000;
}
.show-desktop {
  width: 14px;
  height: 38px;
  flex: none;
  box-sizing: border-box;
  border: 1px solid #222;
  background: linear-gradient(to right, #6f6e66, #3a3a34);
}

/* join.me */
.joinme {
  position: absolute;
  left: 522px;
  top: 70px;
  width: 272px;
  height: 50px;
  background: #232323;
  box-shadow: 0 2px 6px rgba(0,0,0,.55);
}
.jm-top { display: flex; height: 33px; position: relative; }
.jm-logo { margin: 11px 0 0 11px; }
.jm-url {
  margin: 8px 0 0 8px;
  font-family: "Open Sans", sans-serif;
  font-weight: 700;
  font-size: 12px;
  line-height: 17px;
  color: #fff;
  white-space: nowrap;
}
.jm-host { color: #8a8a8a; }
.jm-caret {
  margin: 15px 0 0 4px;
  width: 0;
  height: 0;
  border-left: 3px solid transparent;
  border-right: 3px solid transparent;
  border-top: 3px solid #ddd;
}
.jm-free {
  margin: 8px 0 0 8px;
  color: #f47d00;
  font-size: 12.500px;
  line-height: 18px;
}
.jm-min { margin: 13px 0 0 8px; width: 11px; height: 1px; background: #aaa; }
.jm-close {
  margin-left: auto;
  margin-right: 5px;
  width: 45px;
  height: 20px;
  background: #444;
  display: flex;
  align-items: center;
  justify-content: center;
}
.jm-actions { display: flex; gap: 10px; margin-left: 44px; }
.jm-circle {
  width: 39px;
  height: 39px;
  flex: none;
  border-radius: 50%;
  background: #ff9000;
  display: flex;
  align-items: center;
  justify-content: center;
  gap: 3px;
  box-shadow: 0 1px 4px rgba(0,0,0,.45);
}
.jm-circle.off { background: #b6b6b6; }
.jm-circle i { width: 4px; height: 4px; border-radius: 50%; background: #fff; }

.share-frame {
  position: absolute;
  inset: 0;
  box-sizing: border-box;
  border: 7px solid rgba(250,145,10,.65);
  border-right-width: 6px;
  border-bottom-width: 6px;
  pointer-events: none;
}
</style>
